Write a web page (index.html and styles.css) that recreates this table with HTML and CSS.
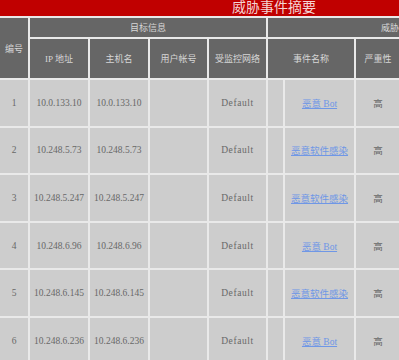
FILE: index.html
```html
<!DOCTYPE html>
<html lang="zh">
<head>
<meta charset="utf-8">
<title>威胁事件摘要</title>
<link rel="stylesheet" href="styles.css">
</head>
<body>
<div class="page">
  <div class="title">威胁事件摘要</div>
  <table class="summary">
    <colgroup>
      <col class="c-no"><col class="c-ip"><col class="c-host"><col class="c-user"><col class="c-net"><col class="c-pad"><col class="c-event"><col class="c-sev"><col class="c-more">
    </colgroup>
    <thead>
      <tr class="h1">
        <th rowspan="2">编号</th>
        <th colspan="4">目标信息</th>
        <th colspan="4">威胁情报</th>
      </tr>
      <tr class="h2">
        <th>IP 地址</th>
        <th>主机名</th>
        <th>用户帐号</th>
        <th>受监控网络</th>
        <th colspan="2">事件名称</th>
        <th>严重性</th>
        <th>描述</th>
      </tr>
    </thead>
    <tbody>
      <tr><td>1</td><td>10.0.133.10</td><td>10.0.133.10</td><td></td><td class="net">Default</td><td></td><td><a href="#">恶意 Bot</a></td><td>高</td><td></td></tr>
      <tr><td>2</td><td>10.248.5.73</td><td>10.248.5.73</td><td></td><td class="net">Default</td><td></td><td><a href="#">恶意软件感染</a></td><td>高</td><td></td></tr>
      <tr><td>3</td><td>10.248.5.247</td><td>10.248.5.247</td><td></td><td class="net">Default</td><td></td><td><a href="#">恶意软件感染</a></td><td>高</td><td></td></tr>
      <tr><td>4</td><td>10.248.6.96</td><td>10.248.6.96</td><td></td><td class="net">Default</td><td></td><td><a href="#">恶意 Bot</a></td><td>高</td><td></td></tr>
      <tr><td>5</td><td>10.248.6.145</td><td>10.248.6.145</td><td></td><td class="net">Default</td><td></td><td><a href="#">恶意软件感染</a></td><td>高</td><td></td></tr>
      <tr><td>6</td><td>10.248.6.236</td><td>10.248.6.236</td><td></td><td class="net">Default</td><td></td><td><a href="#">恶意 Bot</a></td><td>高</td><td></td></tr>
    </tbody>
  </table>
</div>
</body>
</html>
```
FILE: styles.css
```css
html {
  overflow: hidden;
  background: #ffffff;
}
body {
  margin: 0;
  font-family: "Liberation Serif", "Noto Sans CJK SC", serif;
}
.page {
  width: 548px;
}
.title {
  height: 16px;
  line-height: 16px;
  background: #c00000;
  color: #f4d4d4;
  text-align: center;
  font-size: 14px;
}
.summary {
  table-layout: fixed;
  width: 534px;
  margin-left: -2px;
  border-collapse: separate;
  border-spacing: 2px;
  background: #e9e9e9;
  font-size: 9px;
}
.c-no { width: 28px; }
.c-ip { width: 58px; }
.c-host { width: 58px; }
.c-user { width: 57px; }
.c-net { width: 57px; }
.c-pad { width: 15px; }
.c-event { width: 69px; }
.c-sev { width: 44px; }
.c-more { width: 128px; }
.summary th,
.summary td {
  padding: 0;
  text-align: center;
  vertical-align: middle;
  overflow: hidden;
  white-space: nowrap;
}
.summary th {
  background: #666666;
  color: #d6d6d6;
  font-weight: normal;
}
.h1 { height: 19px; }
.h2 { height: 39px; }
.summary tbody tr { height: 45.6px; }
.summary td {
  background: #cdcdcd;
  color: #686868;
  font-size: 9.5px;
}
.summary td.net { letter-spacing: 0.6px; }
.summary a {
  color: #6f97e6;
  text-decoration: underline;
}
```
